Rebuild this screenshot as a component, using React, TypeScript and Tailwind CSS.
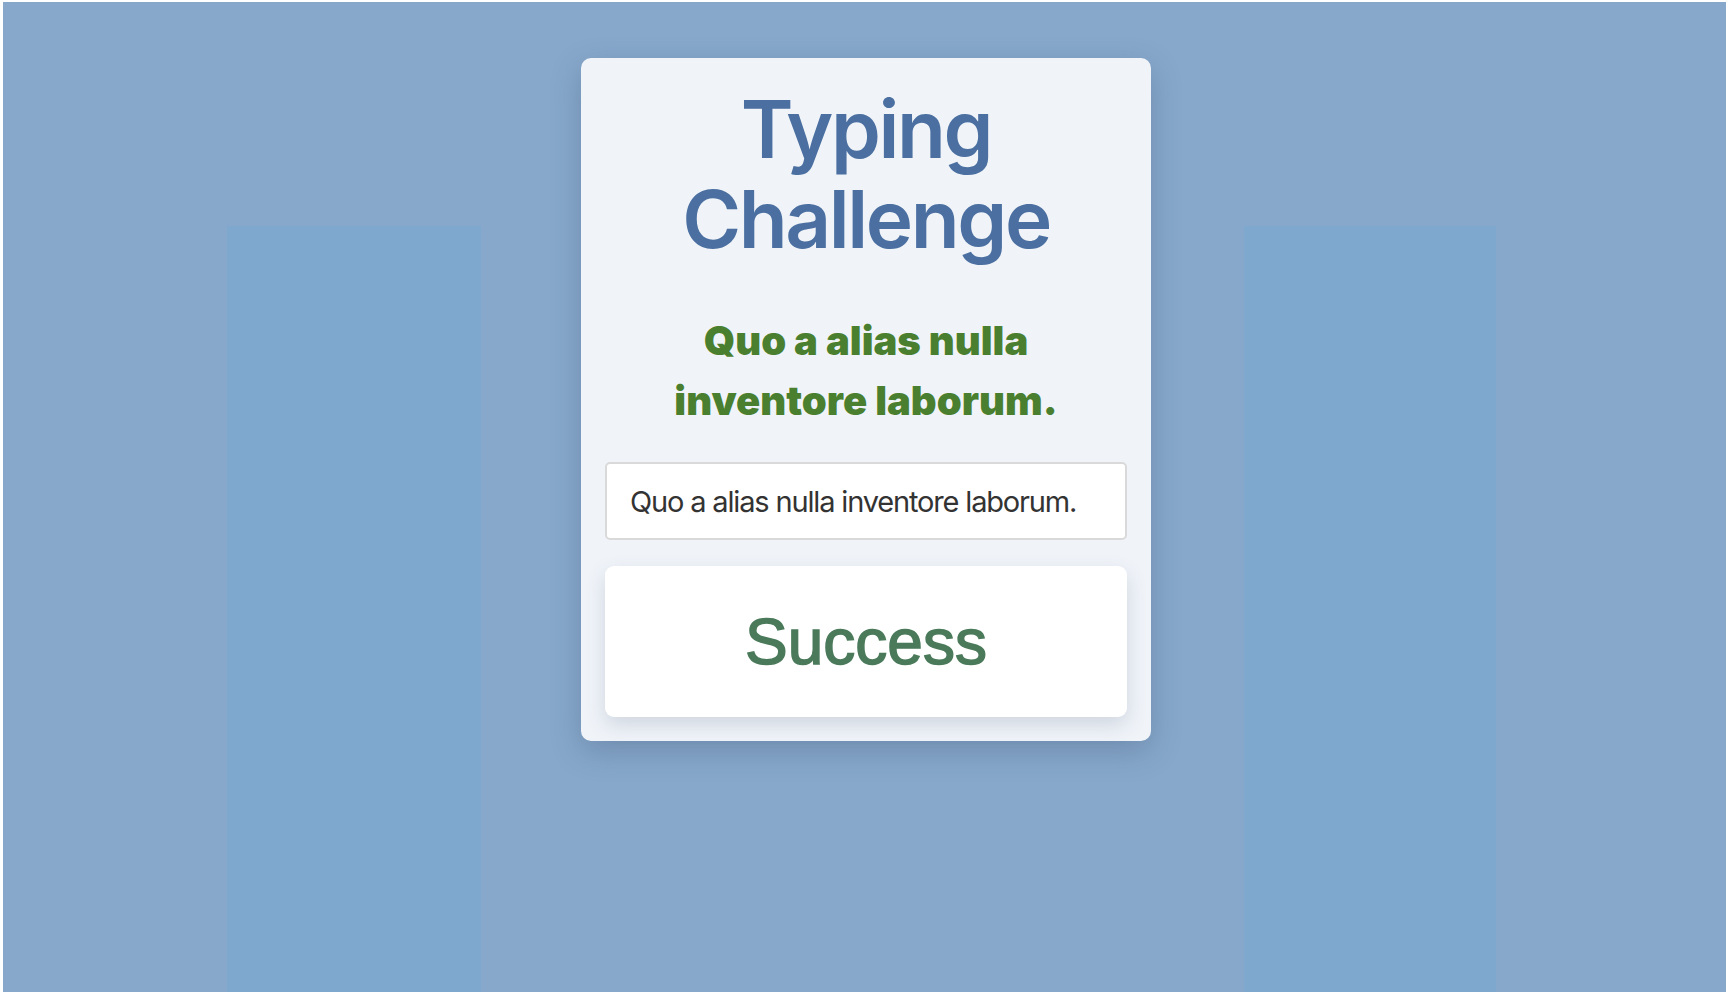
import React from "react";

function TypingChallenge() {
  return (
    <div className="w-full h-[992px] bg-white pt-[2px] pl-[3px] overflow-hidden">
      <div className="h-[990px] bg-[#87a8cb] flex items-start pl-[224px]">
        {/* Left decorative column */}
        <div className="w-[254px] self-stretch mt-[224px] bg-[#7ea8cd]" />

        {/* Challenge card */}
        <div className="ml-[100px] mt-[56px] w-[570px] bg-[#f0f4f9] rounded-[10px] shadow-[0_10px_30px_rgba(40,60,90,0.25)] px-6 pt-[26px] pb-6 flex flex-col items-center">
          <h1 className="font-['Inter',sans-serif] text-[80px] leading-[90px] font-semibold tracking-[-0.03em] text-[#4a6fa0] text-center">
            Typing
            <br />
            Challenge
          </h1>

          <p className="mt-[47px] font-['Inter',sans-serif] text-[40px] leading-[60px] font-black text-[#4a7f30] text-center px-4">
            Quo a alias nulla inventore laborum.
          </p>

          <input
            type="text"
            readOnly
            value="Quo a alias nulla inventore laborum."
            className="mt-[31px] w-full h-[78px] rounded-[5px] border-2 border-[#d9d9d9] bg-white px-[23px] font-['Inter',sans-serif] text-[29px] tracking-[-0.04em] text-[#333333] outline-none"
          />

          <div className="mt-[26px] w-full h-[151px] bg-white rounded-[9px] shadow-[0_8px_20px_rgba(60,80,110,0.18)] flex items-center justify-center">
            <span className="font-['Liberation_Sans',Arial,sans-serif] text-[64px] text-[#4a7a5a] [-webkit-text-stroke:1.5px_#4a7a5a]">
              Success
            </span>
          </div>
        </div>

        {/* Right decorative column */}
        <div className="ml-[93px] w-[252px] self-stretch mt-[224px] bg-[#7ea8cd]" />
      </div>
    </div>
  );
}

export default function App() {
  return <TypingChallenge />;
}
